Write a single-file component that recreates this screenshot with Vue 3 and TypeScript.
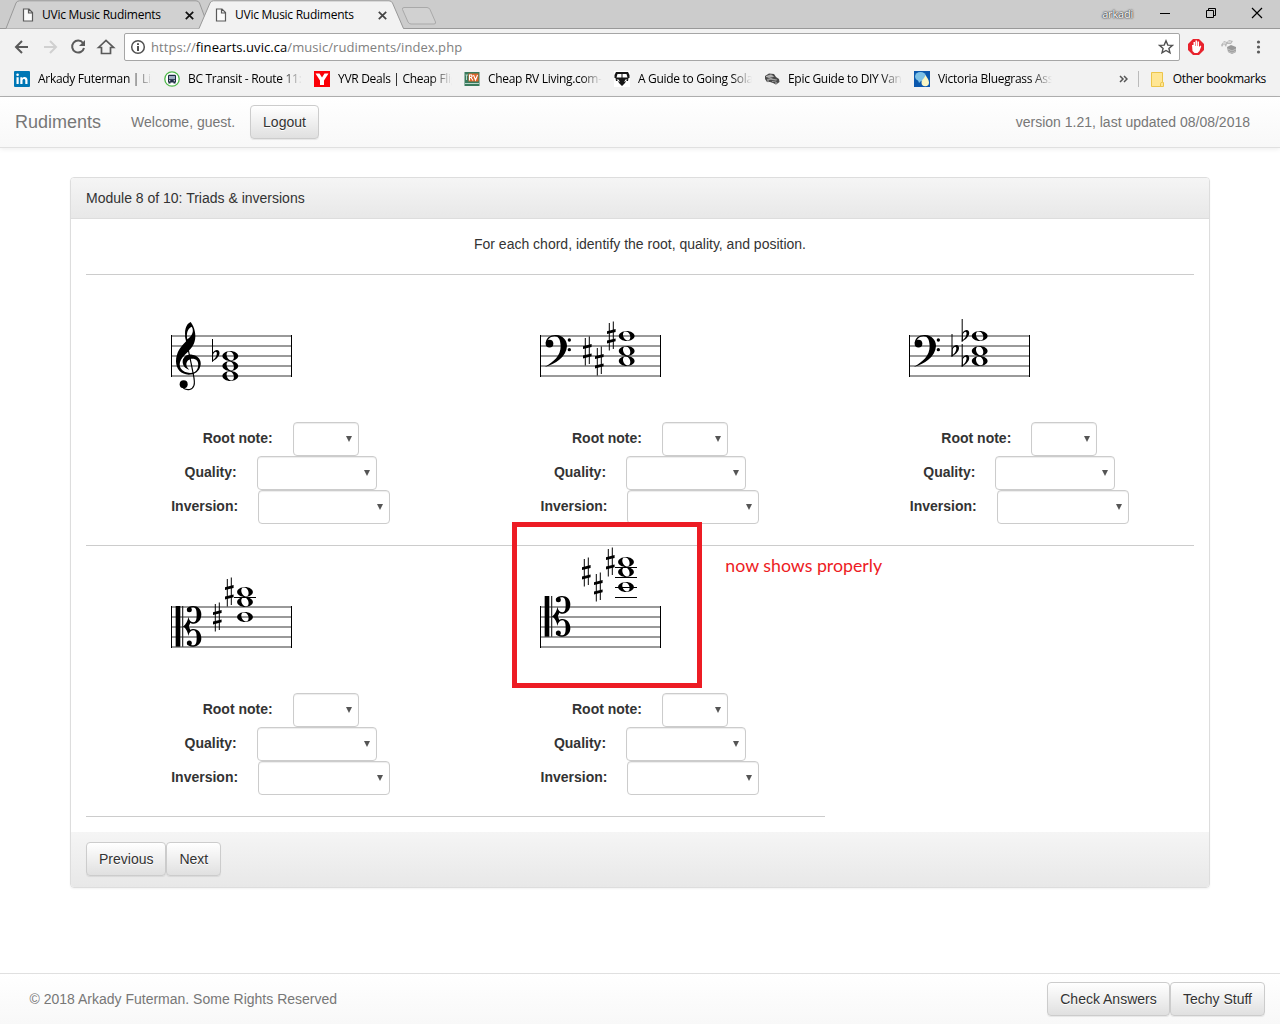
<script setup lang="ts">
interface Point { x: number; y: number }
interface Chord {
  clef: 'treble' | 'bass' | 'alto' | 'tenor'
  noteX: number
  notes: number[]
  flats?: Point[]
  sharps?: Point[]
  ledgers?: number[]
}

const chords: Chord[] = [
  { clef: 'treble', noteX: 59.3, notes: [20, 30, 40], flats: [{ x: 41.5, y: 20 }] },
  { clef: 'bass', noteX: 86.7, notes: [0, 15, 25], sharps: [{ x: 47.3, y: 15 }, { x: 59.3, y: 25 }, { x: 71.3, y: 0 }] },
  { clef: 'bass', noteX: 70.7, notes: [0, 15, 25], flats: [{ x: 53.2, y: 0 }, { x: 43, y: 15 }, { x: 53.2, y: 25 }] },
  { clef: 'alto', noteX: 74, notes: [-15, -5, 10], sharps: [{ x: 58.3, y: -15 }, { x: 46.3, y: 10 }], ledgers: [-9.5] },
  { clef: 'tenor', noteX: 86, notes: [-45, -35, -20], sharps: [{ x: 46.3, y: -35 }, { x: 58.3, y: -20 }, { x: 70.3, y: -45 }], ledgers: [-39.5, -29.5, -19.5, -9.5] },
]
const lines = [0, 10, 20, 30, 40]
const fields = [
  { label: 'Root note:', size: 'short' },
  { label: 'Quality:', size: 'medium' },
  { label: 'Inversion:', size: 'long' },
]
const bookmarks = [
  { icon: 'linkedin', text: 'Arkady Futerman | Lin' },
  { icon: 'bus', text: 'BC Transit - Route 11:' },
  { icon: 'yvr', text: 'YVR Deals | Cheap Flig' },
  { icon: 'rv', text: 'Cheap RV Living.com-' },
  { icon: 'van', text: 'A Guide to Going Sola' },
  { icon: 'car', text: 'Epic Guide to DIY Van' },
  { icon: 'vba', text: 'Victoria Bluegrass Ass' },
]
</script>

<template>
  <div class="window">
    <header class="chrome">
      <div class="tabs">
        <svg class="tab-shapes" width="1280" height="29" viewBox="0 0 1280 29">
          <path d="M0 28.5H1280" stroke="#999" />
          <path d="M6 28.5L16 3Q17 .8 19.500 .8H196Q198.500 .8 199.500 3L209 28.500" fill="#d1d1d1" stroke="#999" />
          <path d="M199 29L210 3Q211 .8 213.500 .8H389Q391.500 .8 392.500 3L403.500 29Z" fill="#f2f2f2" />
          <path d="M199 28.500L210 3Q211 .8 213.500 .8H389Q391.500 .8 392.500 3L403.500 28.500" fill="none" stroke="#999" />
          <path d="M404 7.500H427Q429 7.500 430 9.500L435.500 22Q436 24 434 24H411Q409 24 408 22L402.500 9.500Q402 7.500 404 7.500Z" fill="#d1d1d1" stroke="#a9a9a9" />
        </svg>
        <div v-for="n in 2" :key="n" class="tab">
          <svg width="12" height="14" viewBox="0 0 12 14"><path d="M1.500 1H7L10.500 4.500V13H1.500ZM6.500 1V5H10.500" fill="#fbfbfb" stroke="#5a5a5a" stroke-width="1.200" /></svg>
          <span>UVic Music Rudiments</span>
          <svg class="tab-close" width="9" height="9" viewBox="0 0 9 9"><path d="M.8.8L8.200 8.200M8.200.8L.8 8.200" :stroke="n === 1 ? '#111' : '#444'" stroke-width="1.700" /></svg>
        </div>
        <span class="profile">arkadi</span>
        <svg class="controls" width="110" height="20" viewBox="0 0 110 20" fill="none" stroke="#000">
          <path d="M5 9.500H15M51.500 6.500H58.500V13.500H51.500ZM53.500 6V4.500H60.500V11.500H59" />
          <path d="M97 4L107 14M107 4L97 14" stroke-width="1.200" />
        </svg>
      </div>
      <div class="toolbar">
        <svg width="110" height="28" viewBox="0 0 110 28" fill="none" stroke="#5a5a5a" stroke-width="2">
          <path d="M15 14H3.500M9 8L3 14L9 20" transform="translate(13)" />
          <path d="M2 14H13M8 8L14 14L8 20" transform="translate(42)" stroke="#d0d0d0" />
          <path d="M83 10A6 6 0 1 0 84 15" /><path d="M85 7V13H79Z" fill="#5a5a5a" stroke="none" />
          <path d="M98.500 14.500L106 7.500L113.500 14.500H110.500V20.500H101.500V14.500Z" stroke-width="1.700" />
        </svg>
        <div class="address">
          <svg width="16" height="16" viewBox="0 0 16 16"><circle cx="8" cy="8" r="6.300" fill="none" stroke="#505050" stroke-width="1.500" /><path d="M7 4.200H9V6H7ZM7 7H9V12H7Z" fill="#505050" /></svg>
          <span class="url">https://<b>finearts.uvic.ca</b>/music/rudiments/index.php</span>
          <svg class="star" width="16" height="16" viewBox="0 0 16 16"><path d="M8 1.800L9.800 6.100L14.400 6.400L10.900 9.400L12 13.900L8 11.500L4 13.900L5.100 9.400L1.600 6.400L6.200 6.100Z" fill="none" stroke="#505050" stroke-width="1.400" /></svg>
        </div>
        <svg class="extensions" width="90" height="24" viewBox="0 0 90 24">
          <path d="M5 4H11L16 9V15L11 20H5L0 15V9Z" fill="#e8232d" />
          <path d="M5.500 7H7V11H7.500V5.500H9V11H9.500V6.500H11V12L12.300 10.500L13.300 11.200L11.500 16L9.500 18H6.500L4.500 16L4 10H5.500Z" fill="#fff" />
          <path d="M39 12L43 10L48 12V17L44 19L40 17Z" fill="#999" /><path d="M40 14L44 16L48 14M40 16L44 18L48 16" stroke="#ddd" fill="none" stroke-width=".6" />
          <path d="M33 10L36 6L39 7L41 5L45 6L43 9L39 9L38 12L36 9L34 12Z" fill="#b9b9b9" /><path d="M35 8H38M40 7H43" stroke="#eee" />
          <g fill="#5a5a5a"><circle cx="70.500" cy="7" r="1.600" /><circle cx="70.500" cy="12" r="1.600" /><circle cx="70.500" cy="17" r="1.600" /></g>
        </svg>
      </div>
      <div class="bookmarks">
        <div v-for="b in bookmarks" :key="b.icon" class="bookmark">
          <svg width="16" height="16" viewBox="0 0 16 16">
            <g v-if="b.icon === 'linkedin'"><rect width="16" height="16" rx="1" fill="#0077b5" /><path d="M2.500 6.200H4.700V13H2.500ZM6.300 6.200H8.400V7.200C9.400 5.500 13.500 5.400 13.500 9.100V13H11.300V9.500C11.300 7.300 8.500 7.500 8.500 9.500V13H6.300Z" fill="#fff" /><circle cx="3.600" cy="3.800" r="1.300" fill="#fff" /></g>
            <g v-else-if="b.icon === 'bus'"><circle cx="8" cy="8" r="7.200" fill="#fff" stroke="#4db848" stroke-width="1.300" /><rect x="4" y="3.700" width="8" height="7.800" rx="1.300" fill="#1b2b42" /><path d="M5 5H11V8.200H5Z" fill="#9eacc0" /><path d="M4.500 11H6.500V12.500H4.500ZM9.500 11H11.500V12.500H9.500Z" fill="#1b2b42" /><path d="M5 9.800H6.300M9.700 9.800H11" stroke="#fff" /></g>
            <g v-else-if="b.icon === 'yvr'"><rect width="16" height="16" fill="#fb0007" /><path d="M1.500 2.500H5.500L8 6.500L10.500 2.500H14.500L10 9.500V14H6V9.500Z" fill="#fff" /></g>
            <g v-else-if="b.icon === 'rv'"><rect x=".5" y="1" width="15" height="14" fill="#397b5d" /><rect x="4.500" y="2.500" width="10" height="8" fill="#dc6428" /><path d="M5.500 9.500V4H7.500Q9 5.500 7 6.500H5.500M7 6.500L9 9.500M9.500 4L11.500 9L13.500 4" fill="none" stroke="#fff" stroke-width="1.100" /><path d="M1.500 4H4M2.500 4V9M1 12.500H15" stroke="#b9d7ca" fill="none" /></g>
            <g v-else-if="b.icon === 'van'"><rect width="16" height="16" fill="#fff" /><path d="M2 1H14L15.500 4V7H14.500L14 10H12L11 12L8 15L5 12L4 10H2L1.500 7H.5V4Z" fill="#151515" /><path d="M3.500 3H7.500V6.500H2.500ZM8.500 3H12.500L13.500 6.500H8.500ZM2.500 8.500H4.500L6 11L4 10ZM13.500 8.500H11.500L10 11L12 10Z" fill="#fff" /></g>
            <g v-else-if="b.icon === 'car'"><path d="M1 5L5 2.500L10 3L12 6L15 8L15.500 11L12 13.500L9 12L6 11L3 11L1 8Z" fill="#4a4a4a" /><path d="M2 5.500L7 3.800L9.500 5.500L5 6.500ZM3 8.500L7 7.500L10 8.500L13 9M8 10.500L12 10" fill="#aaa" stroke="#ccc" stroke-width=".6" /><circle cx="4" cy="10" r="1.200" fill="#888" /><circle cx="12" cy="12" r="1.200" fill="#888" /></g>
            <g v-else><rect width="16" height="16" fill="#0b58ad" /><ellipse cx="6.500" cy="5.500" rx="5.500" ry="4.500" fill="#7dc1e6" /><path d="M4 9L8 9L5 12Z" fill="#7dc1e6" /><path d="M11.500 4C13 7 15 8.500 15 11.500A3.700 3.700 0 0 1 7.500 11.500C7.500 8.800 10.500 7.500 11.500 4Z" fill="#fbf7c4" /></g>
          </svg>
          <span>{{ b.text }}</span>
        </div>
        <div class="more">
          <svg width="9" height="8" viewBox="0 0 9 8"><path d="M1 1L4 4L1 7M5 1L8 4L5 7" fill="none" stroke="#555" stroke-width="1.500" /></svg>
          <i class="separator"></i>
          <svg width="13" height="15" viewBox="0 0 13 15"><path d="M.5.500H11.500V10.500H12.500V14.500H.5Z" fill="#ffe694" stroke="#ecc54b" /><path d="M9.500 14V11.500Q9.500 10.500 11 10.500" fill="none" stroke="#ecc54b" /></svg>
          <span>Other bookmarks</span>
        </div>
      </div>
    </header>

    <nav class="navbar">
      <span class="brand">Rudiments</span>
      <span class="welcome">Welcome, guest.</span>
      <button class="btn">Logout</button>
      <span class="version">version 1.21, last updated 08/08/2018</span>
    </nav>

    <main class="panel">
      <div class="panel-heading">Module 8 of 10: Triads &amp; inversions</div>
      <div class="panel-body">
        <p class="instruction">For each chord, identify the root, quality, and position.</p>
        <div class="chords">
          <section v-for="(c, i) in chords" :key="i" class="chord">
            <svg class="staff" width="150" height="147" viewBox="-10 -61 150 147">
              <path v-for="y in lines" :key="y" :d="`M0 ${y}H121`" stroke="#999" stroke-width="2" />
              <path d="M.5 -1V41M120.500 -1V41" stroke="#000" />
              <g v-if="c.clef === 'treble'" transform="translate(-11 -26) scale(.33333)">
                <path fill-rule="evenodd" d="M79 93C70 62 78 42 92 36C105 52 109 78 104 94C99 112 88 122 76 133C62 146 55 162 62 175C70 188 90 192 104 186C118 178 119 150 103 147C90 144 80 152 79 162C79 170 83 174 88 179C76 176 67 166 68 152C71 138 84 132 96 134C116 136 124 152 122 164C119 184 104 194 86 194C64 194 48 178 48 154C48 126 64 108 79 93ZM82 88C97 78 103 62 95 50C84 54 78 70 82 88Z" />
                <path d="M77 76C80 102 92 150 97 178C101 200 106 216 102 226C97 240 83 242 70 235" fill="none" stroke="#000" stroke-width="3.500" />
                <circle cx="71" cy="223" r="12" />
              </g>
              <g v-else-if="c.clef === 'bass'" transform="translate(-10 -26) scale(.33333)">
                <path d="M47 100C48 82 62 74 79 75C98 76 111 90 111 108C109 141 76 162 44 171C72 154 92 138 92 108C91 89 86 79 74 79C62 80 53 86 52 98Z" />
                <circle cx="58.500" cy="101" r="11.500" /><circle cx="118" cy="90" r="5" /><circle cx="118" cy="119" r="5" />
              </g>
              <g v-else :transform="`translate(-11 ${c.clef === 'alto' ? -37 : -47}) scale(.33333)`">
                <path d="M47 108H61V230H47Z" /><path d="M68 108V230" stroke="#222" stroke-width="3.500" />
                <g v-for="s in [1, -1]" :key="s" :transform="`translate(0 169) scale(1 ${s})`">
                  <path d="M69 1C79 -8 84 -18 85 -29C87 -18 93 -12 101 -12C109 -14 110 -23 110 -35C110 -51 107 -57 98 -57C93 -57 91 -55 93 -50L81 -50C83 -58 90 -61 99 -61C114 -61 124 -51 124 -36C124 -19 114 -8 101 -8C96 -8 93 -9 91 -11L86 1Z" />
                  <circle cx="88" cy="-50" r="7.500" />
                </g>
              </g>
              <path v-for="y in c.ledgers" :key="'l' + y" :d="`M${c.noteX - 11} ${y}h22`" stroke="#000" />
              <g v-for="(p, k) in c.flats" :key="'f' + k" :transform="`translate(${p.x} ${p.y})`">
                <path d="M0 -17V5.500" stroke="#000" />
                <path fill-rule="evenodd" d="M0 -3C3 -7.500 7.500 -6.500 7 -2.500C6.600 1 3 3.500 -.5 6ZM.6 -1.500C2 -5 4.700 -5 4.300 -2C4 1 2 3 .6 4Z" />
              </g>
              <g v-for="(p, k) in c.sharps" :key="'s' + k" :transform="`translate(${p.x} ${p.y})`">
                <path d="M-2 -13V14.500M2 -14.500V13" stroke="#000" />
                <path d="M-4.300 -4.800L4.300 -7V-4L-4.300 -1.900ZM-4.300 4.600L4.300 2.400V5.300L-4.300 7.500Z" />
              </g>
              <g v-for="y in c.notes" :key="'n' + y" :transform="`translate(${c.noteX} ${y})`">
                <path fill-rule="evenodd" d="M0 -5C4 -5 7.900 -2.700 7.900 0S4 5 0 5S-7.900 2.700 -7.900 0S-4 -5 0 -5ZM-1.600 -4.400C-4.300 -3.900 -4 -.2 -2.700 2.100C-1.400 4.300 .4 4.900 1.900 4.300C4.200 3.500 3.900 -.2 2.600 -2.200C1.500 -4 0 -4.800 -1.600 -4.400Z" />
              </g>
            </svg>
            <div v-for="f in fields" :key="f.label" class="field">
              <label>{{ f.label }}</label>
              <div class="select" :class="f.size"><i></i></div>
            </div>
            <div v-if="i === 4" class="highlight"></div>
            <div v-if="i === 4" class="remark">now shows properly</div>
          </section>
        </div>
      </div>
      <div class="panel-footer">
        <button class="btn">Previous</button><button class="btn">Next</button>
      </div>
    </main>

    <footer class="footer">
      <span>© 2018 Arkady Futerman. Some Rights Reserved</span>
      <div><button class="btn check">Check Answers</button><button class="btn">Techy Stuff</button></div>
    </footer>
  </div>
</template>

<style>
body { background: #fff; overflow: hidden; }
</style>

<style scoped>
* { box-sizing: border-box; }
svg { flex: none; display: block; }
.window { width: 1280px; height: 1024px; display: flex; flex-direction: column; font: 14px/20px "Liberation Sans", Arial, sans-serif; color: #333; }
.chrome { height: 97px; background: #f2f2f2; border-bottom: 1px solid #b1b1b1; font: 12px/16px "Open Sans", sans-serif; color: #000; }
.tabs { position: relative; height: 29px; background: #ccc; display: flex; padding-left: 22px; }
.tab-shapes { position: absolute; left: 0; top: 0; }
.tab { position: relative; width: 193px; display: flex; align-items: center; padding-top: 1px; }
.tab span { margin-left: 8px; width: 142.500px; letter-spacing: -.26px; white-space: nowrap; }
.profile { position: relative; margin: 6px 22px 0 auto; font-size: 11px; letter-spacing: -.2px; color: #fff; text-shadow: 0 0 1px #333, 0 0 2px #444, 0 0 2px #666; }
.controls { margin: 4px 15px 0 0; }
.toolbar { height: 36px; display: flex; align-items: center; }
.toolbar > svg:first-child { overflow: visible; }
.address { width: 1056px; height: 28px; margin-left: 14px; background: #fff; border: 1px solid #a6a6a6; border-radius: 2px; display: flex; align-items: center; padding: 0 5px; }
.url { margin: -1px 0 0 5px; font-size: 13px; letter-spacing: .06px; color: #808080; }
.url b { font-weight: 400; color: #000; }
.star { margin-left: auto; }
.extensions { margin-left: 8px; }
.bookmarks { height: 28px; display: flex; align-items: center; padding: 0 14px; }
.bookmark { width: 150px; display: flex; align-items: center; }
.bookmark span { margin-left: 8px; width: 114px; overflow: hidden; white-space: nowrap; letter-spacing: -.3px; -webkit-mask-image: linear-gradient(90deg, #000 82%, transparent); mask-image: linear-gradient(90deg, #000 82%, transparent); }
.more { margin-left: auto; display: flex; align-items: center; white-space: nowrap; letter-spacing: -.35px; }
.separator { width: 1px; height: 16px; background: #bbb; margin: 0 12px 0 10px; }
.more span { margin-left: 9px; }
.navbar { height: 51px; display: flex; align-items: center; padding: 0 30px 1px 15px; background: linear-gradient(#fff, #f8f8f8); border-bottom: 1px solid #e0e0e0; box-shadow: 0 1px 5px rgba(0, 0, 0, .075); color: #777; text-shadow: 0 1px 0 rgba(255, 255, 255, .25); }
.brand { font-size: 18px; }
.welcome { margin: 0 15px 0 30px; }
.version { margin-left: auto; }
.btn { height: 34px; padding: 6px 12px; font: 14px/20px "Liberation Sans", Arial, sans-serif; color: #333; border: 1px solid #ccc; border-radius: 4px; background: linear-gradient(#fff, #e0e0e0); text-shadow: 0 1px 0 #fff; box-shadow: inset 0 1px 0 rgba(255, 255, 255, .15), 0 1px 1px rgba(0, 0, 0, .075); }
.check { width: 123px; }
.panel { width: 1140px; height: 711px; margin: 29px auto 0; border: 1px solid #ddd; border-radius: 4px; box-shadow: 0 1px 2px rgba(0, 0, 0, .05); }
.panel-heading { height: 41px; padding: 10px 15px; border-bottom: 1px solid #ddd; background: linear-gradient(#f5f5f5, #e8e8e8); border-radius: 3px 3px 0 0; }
.panel-body { height: 613px; padding: 15px 15px 0; }
.instruction { margin: 0; height: 41px; text-align: center; border-bottom: 1px solid #ccc; }
.chords { display: flex; flex-wrap: wrap; }
.chord { position: relative; width: 33.3333%; height: 271px; border-bottom: 1px solid #ccc; }
.staff { margin-left: 74.700px; }
.field { height: 34px; display: flex; justify-content: center; align-items: center; }
.field label { font-weight: 700; padding: 0 20px; margin-top: -2px; }
.select { height: 34px; border: 1px solid #ccc; border-radius: 4px; background: #fff; box-shadow: inset 0 1px 1px rgba(0, 0, 0, .075); display: flex; align-items: center; justify-content: flex-end; padding-right: 6px; }
.select i { border: 3px solid transparent; border-top: 6px solid #555; border-bottom: 0; }
.short { width: 66px; }
.medium { width: 120px; }
.long { width: 132px; }
.highlight { position: absolute; left: 57px; top: -24px; width: 190px; height: 166px; border: 5px solid #ed1c24; }
.remark { position: absolute; left: 270px; top: 9px; font: 17.750px/20px Lato, sans-serif; color: #ed1c24; white-space: nowrap; }
.panel-footer { height: 55px; padding: 10px 15px; background: linear-gradient(#f5f5f5, #e8e8e8); border-radius: 0 0 3px 3px; display: flex; }
.footer { margin-top: auto; height: 51px; border-top: 1px solid #e0e0e0; background: linear-gradient(#fff, #f8f8f8); display: flex; justify-content: space-between; align-items: center; padding: 0 15px 0 29.500px; color: #777; }
.footer div { display: flex; }
</style>
